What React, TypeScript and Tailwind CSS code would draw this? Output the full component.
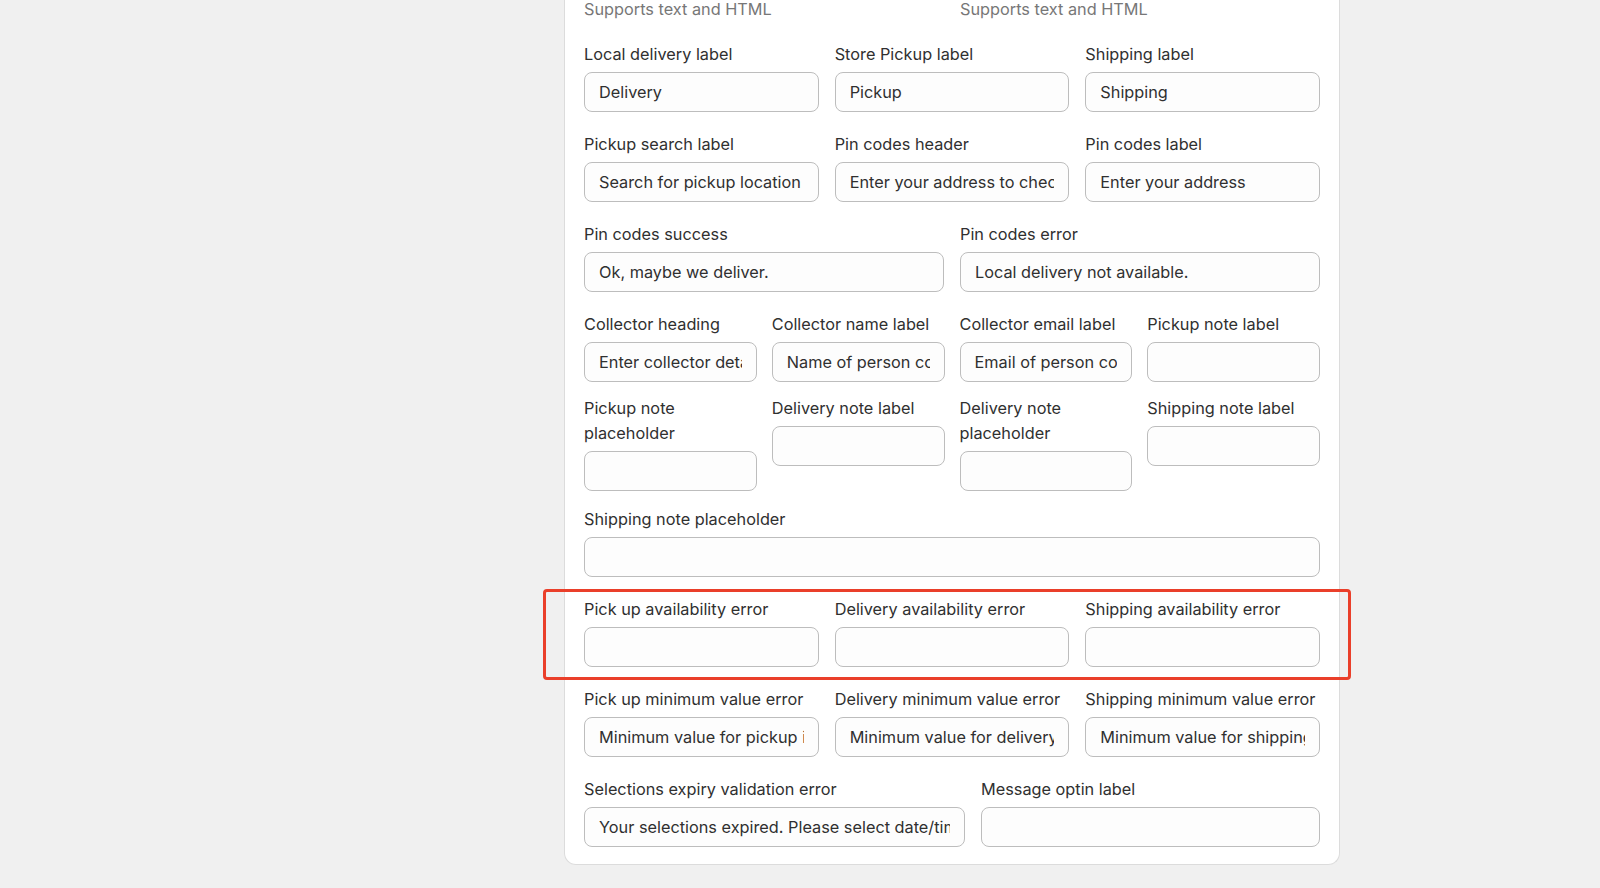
const font = { fontFamily: "Inter, 'Noto Sans', Arial, sans-serif" };

function Field({ label, value, placeholder }: { label: string; value?: string; placeholder?: string }) {
    return (
        <div className="flex flex-col min-w-0">
            <label className="text-[16.3px] leading-[25px] text-[#303030]">{label}</label>
            <input
                readOnly
                value={value || ""}
                placeholder={placeholder}
                className="mt-[5px] h-[40px] w-full rounded-lg border border-[#bdbdbd] bg-[#fdfdfd] px-[14px] text-[16.3px] text-[#303030] outline-none"
            />
        </div>
    );
}

export default function App() {
    return (
        <div style={font} className="min-h-[888px] w-full bg-[#f0f0f0] flex">
            <div className="ml-[564px] w-[776px] self-start rounded-b-xl border border-t-0 border-[#dcdcdc] bg-white px-[19px] pb-[17px]">
                <div className="grid grid-cols-2 gap-x-4 -mt-[3px] text-[16.3px] leading-[25px] text-[#777]">
                    <span>Supports text and HTML</span>
                    <span>Supports text and HTML</span>
                </div>
                <div className="mt-[20px] grid grid-cols-3 gap-x-4">
                    <Field label="Local delivery label" value="Delivery" />
                    <Field label="Store Pickup label" value="Pickup" />
                    <Field label="Shipping label" value="Shipping" />
                </div>
                <div className="mt-[20px] grid grid-cols-3 gap-x-4">
                    <Field label="Pickup search label" value="Search for pickup location" />
                    <Field label="Pin codes header" value="Enter your address to check" />
                    <Field label="Pin codes label" value="Enter your address" />
                </div>
                <div className="mt-[20px] grid grid-cols-2 gap-x-4">
                    <Field label="Pin codes success" value="Ok, maybe we deliver." />
                    <Field label="Pin codes error" value="Local delivery not available." />
                </div>
                <div className="mt-[20px] grid grid-cols-4 gap-x-[15px]">
                    <Field label="Collector heading" value="Enter collector details" />
                    <Field label="Collector name label" value="Name of person collecting" />
                    <Field label="Collector email label" value="Email of person collecting" />
                    <Field label="Pickup note label" />
                </div>
                <div className="mt-[14px] grid grid-cols-4 gap-x-[15px] items-start">
                    <Field label="Pickup note placeholder" />
                    <Field label="Delivery note label" />
                    <Field label="Delivery note placeholder" />
                    <Field label="Shipping note label" />
                </div>
                <div className="mt-[16px]">
                    <Field label="Shipping note placeholder" />
                </div>
                <div className="relative mt-[20px] grid grid-cols-3 gap-x-4">
                    <Field label="Pick up availability error" />
                    <Field label="Delivery availability error" />
                    <Field label="Shipping availability error" />
                    <div className="pointer-events-none absolute -left-[41px] -right-[31px] -top-[8px] -bottom-[13px] rounded border-[3px] border-[#ea3f2a]" />
                </div>
                <div className="mt-[20px] grid grid-cols-3 gap-x-4">
                    <Field label="Pick up minimum value error" value="Minimum value for pickup is" />
                    <Field label="Delivery minimum value error" value="Minimum value for delivery is" />
                    <Field label="Shipping minimum value error" value="Minimum value for shipping is" />
                </div>
                <div className="mt-[20px] grid grid-cols-[381px_1fr] gap-x-4">
                    <Field label="Selections expiry validation error" value="Your selections expired. Please select date/time again." />
                    <Field label="Message optin label" />
                </div>
            </div>
        </div>
    );
}
